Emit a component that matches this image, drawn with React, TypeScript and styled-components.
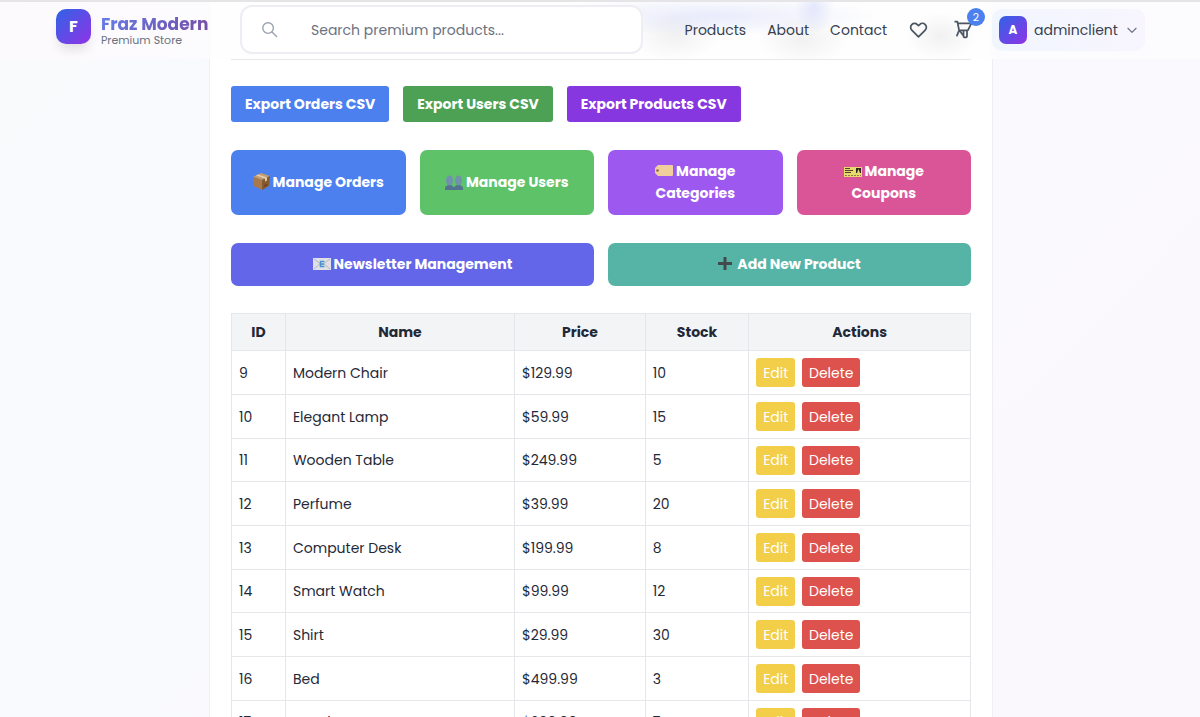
import React from "react";
import styled, { createGlobalStyle } from "styled-components";

const GlobalStyle = createGlobalStyle`
  *, *::before, *::after { box-sizing: border-box; }
  body {
    margin: 0;
    font-family: Poppins, Inter, "Noto Sans", sans-serif;
    font-size: 14px;
    line-height: 22px;
    color: #1f2937;
    background: linear-gradient(135deg, #f8fafc 0%, #fafafe 50%, #faf7fd 100%);
  }
  button, input { font: inherit; }
`;

const Page = styled.div`
  height: 100vh;
  overflow: hidden;
  display: flex;
  flex-direction: column;
`;

const Header = styled.header`
  flex: none;
  height: 59px;
  padding: 0 55px 2px 56px;
  display: flex;
  align-items: center;
  border-top: 2px solid #e5e5e8;
  background:
    radial-gradient(ellipse 46px 24px at 675px 34px, rgba(0, 0, 0, 0.05), transparent),
    radial-gradient(ellipse 46px 24px at 803px 38px, rgba(0, 0, 0, 0.05), transparent),
    radial-gradient(ellipse 36px 24px at 941px 34px, rgba(0, 0, 0, 0.05), transparent),
    radial-gradient(ellipse 170px 20px at 710px 14px, rgba(99, 120, 235, 0.14), transparent),
    radial-gradient(ellipse 20px 28px at 814px 4px, rgba(99, 120, 235, 0.14), transparent),
    linear-gradient(90deg, #fcfafd 0, #fcfbfd 209px, #fefefe 212px, #fefefe 990px, #fcfbfe 993px);
`;

const Brand = styled.a`
  display: flex;
  gap: 10px;
  width: 184px;
  flex: none;
  text-decoration: none;
`;

const Monogram = styled.span<{ $size: number; $font: number }>`
  flex: none;
  display: grid;
  place-items: center;
  width: ${(p) => p.$size}px;
  height: ${(p) => p.$size}px;
  border-radius: ${(p) => (p.$size > 30 ? 10 : 7)}px;
  background: linear-gradient(135deg, #2f63e6, #9133e6);
  color: #fff;
  font-size: ${(p) => p.$font}px;
  font-weight: 700;
  box-shadow: ${(p) => (p.$size > 30 ? "0 8px 12px -3px rgba(0, 0, 0, 0.12)" : "none")};
`;

const BrandText = styled.span`
  display: flex;
  flex-direction: column;
  padding: 4px 0 5px;
`;

const BrandName = styled.span`
  font-size: 17px;
  line-height: 22px;
  font-weight: 700;
  white-space: nowrap;
  background: linear-gradient(135deg, #667eea, #764ba2);
  background-clip: text;
  color: transparent;
`;

const Tagline = styled.span`
  font-size: 11px;
  line-height: 10px;
  color: #6b7280;
`;

const SearchBox = styled.label`
  flex: 1;
  max-width: 403px;
  height: 49px;
  display: flex;
  align-items: center;
  gap: 33px;
  padding: 0 19px;
  border: 2px solid #ededf3;
  border-radius: 12px;
  background: #fff;
  color: #9ca3af;
`;

const SearchInput = styled.input`
  flex: 1;
  min-width: 0;
  padding: 0;
  border: 0;
  outline: 0;
  background: none;
  color: #374151;
  &::placeholder { color: #6b7280; opacity: 1; }
`;

const Nav = styled.nav`
  display: flex;
  gap: 21px;
  margin-left: auto;
`;

const NavLink = styled.a`
  color: #374151;
  text-decoration: none;
`;

const IconButton = styled.button`
  position: relative;
  flex: none;
  display: grid;
  place-items: center;
  width: 21px;
  height: 35px;
  margin-left: 24px;
  padding: 0;
  border: 0;
  background: none;
  color: #4b5563;
`;

const HeartButton = styled(IconButton)`
  margin-left: 21px;
`;

const Badge = styled.span`
  position: absolute;
  top: -4px;
  right: -11px;
  width: 18px;
  height: 18px;
  border-radius: 50%;
  background: #4c80ee;
  color: #fff;
  font-size: 11px;
  line-height: 18px;
  text-align: center;
`;

const Account = styled.button`
  flex: none;
  display: flex;
  align-items: center;
  gap: 7px;
  height: 42px;
  width: 153px;
  margin-left: 18px;
  padding: 0 7px;
  border: 0;
  border-radius: 10px;
  background: linear-gradient(90deg, #f1f6fe, #f8f5fe);
  color: #374151;
  text-align: left;
  svg { flex: none; }
`;

const AccountName = styled.span`
  flex: 1;
`;

const Main = styled.main`
  flex: 1;
  min-height: 0;
  display: flex;
  padding-left: 2px;
`;

const Card = styled.section`
  flex: 1;
  max-width: 784px;
  margin: 0 auto;
  padding: 0 21px;
  background: #fff;
  border: solid #efeff3;
  border-width: 0 1px;
`;

const Rule = styled.hr`
  height: 1px;
  margin: 0 0 26px;
  border: 0;
  background: #e8e8ea;
`;

const Exports = styled.div`
  display: flex;
  gap: 14px;
  margin-bottom: 28px;
`;

const ExportButton = styled.button<{ $color: string }>`
  height: 36px;
  padding: 0 14px;
  border: 0;
  border-radius: 3px;
  background: ${(p) => p.$color};
  color: #fff;
  font-weight: 700;
`;

const Tiles = styled.div<{ $columns: number; $gapBelow: number }>`
  display: grid;
  grid-template-columns: repeat(${(p) => p.$columns}, 1fr);
  gap: 14px;
  margin-bottom: ${(p) => p.$gapBelow}px;
`;

const Tile = styled.a<{ $color: string }>`
  display: flex;
  align-items: center;
  justify-content: center;
  padding: 10px 14px 11px;
  border-radius: 7px;
  background: ${(p) => p.$color};
  color: #fff;
  font-weight: 700;
  text-align: center;
  text-decoration: none;
  svg { vertical-align: -3px; margin-right: 3px; }
`;

const Table = styled.table`
  width: 100%;
  table-layout: fixed;
  border-collapse: collapse;
`;

const HeadCell = styled.th<{ $width: string }>`
  width: ${(p) => p.$width};
  height: 37px;
  padding: 0;
  border: 1px solid #e5e7eb;
  background: #f3f4f6;
  font-weight: 700;
`;

const Row = styled.tr`
  height: 44px;
  &:nth-child(3n) { height: 43px; }
`;

const Cell = styled.td`
  padding: 0 7px;
  border: 1px solid #e5e7eb;
`;

const Actions = styled.div`
  display: flex;
  gap: 7px;
`;

const ActionButton = styled.button<{ $color: string; $width: number }>`
  width: ${(p) => p.$width}px;
  height: 29px;
  padding: 0;
  border: 0;
  border-radius: 3px;
  background: ${(p) => p.$color};
  color: #fff;
`;

const SearchIcon = () => (
  <svg width="17" height="17" viewBox="0 0 24 24" fill="none" stroke="currentColor" strokeWidth="2" strokeLinecap="round">
    <circle cx="10" cy="10" r="7.5" />
    <path d="M15.5 15.5 22 22" />
  </svg>
);

const HeartIcon = () => (
  <svg width="21" height="21" viewBox="0 0 24 24" fill="none" stroke="currentColor" strokeWidth="2" strokeLinecap="round" strokeLinejoin="round">
    <path d="M4.318 6.318a4.5 4.5 0 0 0 0 6.364L12 20.364l7.682-7.682a4.5 4.5 0 0 0-6.364-6.364L12 7.636l-1.318-1.318a4.5 4.5 0 0 0-6.364 0z" />
  </svg>
);

const CartIcon = () => (
  <svg width="21" height="21" viewBox="0 0 24 24" fill="none" stroke="currentColor" strokeWidth="2" strokeLinecap="round" strokeLinejoin="round">
    <path d="M2.500 3H5l.4 2M7 13h10l4-8H5.400L7 13 4.500 19M8 14l3.500 4.500M12 13v6a2 2 0 0 0 4 0V13" />
  </svg>
);

const ChevronIcon = () => (
  <svg width="14" height="14" viewBox="0 0 24 24" fill="none" stroke="#6b7280" strokeWidth="2" strokeLinecap="round" strokeLinejoin="round">
    <path d="m5 9 7 7 7-7" />
  </svg>
);

const BoxIcon = () => (
  <svg width="17" height="17" viewBox="0 0 17 17">
    <path d="M0 4 8 0l9 3-8 4z" fill="#c69c6d" />
    <path d="m0 4 9 3v10L1 13z" fill="#a9794c" />
    <path d="m17 3-8 4v10l7-4z" fill="#87592f" />
    <path d="m3 2.500 9 3v3l2-1V4.600L5 1.500z" fill="#e3cfae" />
    <path d="m11 13 3-1.500" stroke="#4f331b" />
  </svg>
);

const UsersIcon = () => (
  <svg width="18" height="16" viewBox="0 0 18 16">
    <g fill="#557391">
      <path d="M0 16v-2c0-2 3-2 3-4h3c0 2 3 2 3 4v2z" />
      <path d="M9 16v-2c0-2 3-2 3-4h3c0 2 3 2 3 4v2z" />
    </g>
    <g fill="#7191ae">
      <ellipse cx="4.500" cy="6.500" rx="3.500" ry="5" />
      <ellipse cx="13.500" cy="6.500" rx="3.500" ry="5" />
    </g>
  </svg>
);

const TagIcon = () => (
  <svg width="18" height="15" viewBox="0 0 18 15">
    <path d="M3 1h14a1 1 0 0 1 1 1v9a1 1 0 0 1-1 1H3L0 9V4z" fill="#f0cf9d" />
    <circle cx="2.500" cy="6.500" r="1.300" fill="#8d6446" />
  </svg>
);

const TicketIcon = () => (
  <svg width="18" height="14" viewBox="0 0 18 14">
    <path d="M0 2h18v10H0z" fill="#ead96c" />
    <path d="M1 3.500h5M1 5.500h8M1 7.500h6" stroke="#4a4628" />
    <path d="M1 10.500h16" stroke="#8a8040" strokeDasharray="2 1" />
    <path d="M12 3h5v5h-5z" fill="#2a2a1c" />
    <path d="m13 8 1.500-4L16 8z" fill="#ead96c" />
  </svg>
);

const MailIcon = () => (
  <svg width="18" height="14" viewBox="0 0 18 14">
    <path d="M0 0h18v12H0z" fill="#dfe1e6" />
    <path d="m1 1 8 6 8-6M1 11l6-5M17 11l-6-5" fill="none" stroke="#b4b8c2" />
    <path d="M11.500 3.500H7.500v5h4M7.500 6H11" fill="none" stroke="#4c90cf" strokeWidth="1.500" />
  </svg>
);

const PlusIcon = () => (
  <svg width="16" height="15" viewBox="0 0 16 15">
    <path d="M7 0v13M0 6.500h14" stroke="#444a4c" strokeWidth="3" />
  </svg>
);

const products = [
  { id: 9, name: "Modern Chair", price: "$129.99", stock: 10 },
  { id: 10, name: "Elegant Lamp", price: "$59.99", stock: 15 },
  { id: 11, name: "Wooden Table", price: "$249.99", stock: 5 },
  { id: 12, name: "Perfume", price: "$39.99", stock: 20 },
  { id: 13, name: "Computer Desk", price: "$199.99", stock: 8 },
  { id: 14, name: "Smart Watch", price: "$99.99", stock: 12 },
  { id: 15, name: "Shirt", price: "$29.99", stock: 30 },
  { id: 16, name: "Bed", price: "$499.99", stock: 3 },
  { id: 17, name: "Pro Shoes", price: "$299.99", stock: 7 },
];

const columns = [
  ["ID", "7.3%"],
  ["Name", "31%"],
  ["Price", "17.7%"],
  ["Stock", "14%"],
  ["Actions", "30%"],
];

export default function App() {
  return (
    <Page>
      <GlobalStyle />
      <Header>
        <Brand href="#">
          <Monogram $size={35} $font={16}>F</Monogram>
          <BrandText>
            <BrandName>Fraz Modern</BrandName>
            <Tagline>Premium Store</Tagline>
          </BrandText>
        </Brand>
        <SearchBox>
          <SearchIcon />
          <SearchInput type="text" aria-label="Search" placeholder="Search premium products..." />
        </SearchBox>
        <Nav>
          <NavLink href="#">Products</NavLink>
          <NavLink href="#">About</NavLink>
          <NavLink href="#">Contact</NavLink>
        </Nav>
        <HeartButton aria-label="Wishlist"><HeartIcon /></HeartButton>
        <IconButton aria-label="Cart"><CartIcon /><Badge>2</Badge></IconButton>
        <Account>
          <Monogram $size={28} $font={12}>A</Monogram>
          <AccountName>adminclient</AccountName>
          <ChevronIcon />
        </Account>
      </Header>
      <Main>
        <Card>
          <Rule />
          <Exports>
            <ExportButton $color="#4c80ee">Export Orders CSV</ExportButton>
            <ExportButton $color="#4ca154">Export Users CSV</ExportButton>
            <ExportButton $color="#8737e0">Export Products CSV</ExportButton>
          </Exports>
          <Tiles $columns={4} $gapBelow={28}>
            <Tile href="#" $color="#4c80ee"><span><BoxIcon />Manage Orders</span></Tile>
            <Tile href="#" $color="#5ec269"><span><UsersIcon />Manage Users</span></Tile>
            <Tile href="#" $color="#9d58ef"><span><TagIcon />Manage<br />Categories</span></Tile>
            <Tile href="#" $color="#da5597"><span><TicketIcon />Manage<br />Coupons</span></Tile>
          </Tiles>
          <Tiles $columns={2} $gapBelow={27}>
            <Tile href="#" $color="#6366e8"><span><MailIcon />Newsletter Management</span></Tile>
            <Tile href="#" $color="#56b4a7"><span><PlusIcon />Add New Product</span></Tile>
          </Tiles>
          <Table>
            <thead>
              <tr>
                {columns.map(([label, width]) => (
                  <HeadCell key={label} $width={width}>{label}</HeadCell>
                ))}
              </tr>
            </thead>
            <tbody>
              {products.map((p) => (
                <Row key={p.id}>
                  <Cell>{p.id}</Cell>
                  <Cell>{p.name}</Cell>
                  <Cell>{p.price}</Cell>
                  <Cell>{p.stock}</Cell>
                  <Cell>
                    <Actions>
                      <ActionButton $color="#f2ce49" $width={39}>Edit</ActionButton>
                      <ActionButton $color="#dd524c" $width={58}>Delete</ActionButton>
                    </Actions>
                  </Cell>
                </Row>
              ))}
            </tbody>
          </Table>
        </Card>
      </Main>
    </Page>
  );
}
